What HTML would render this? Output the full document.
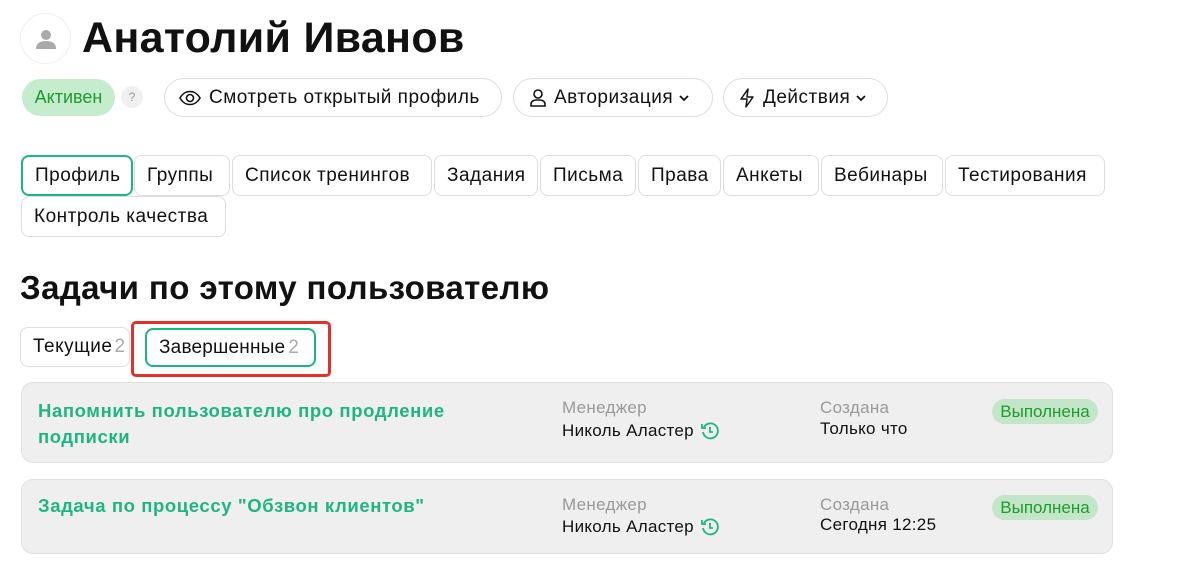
<!DOCTYPE html>
<html><head><meta charset="utf-8"><style>
*{box-sizing:border-box;margin:0;padding:0}
body{width:1200px;height:575px;background:#fff;font-family:"Liberation Sans",sans-serif;color:#111;position:relative;overflow:hidden}
.a{position:absolute}
.btn{position:absolute;border:1px solid #ddd;border-radius:20px;height:39px;display:flex;align-items:center;font-size:19px;letter-spacing:0.5px;padding:0 14px;white-space:nowrap}
.tab{position:absolute;border:1px solid #ddd;border-radius:8px;height:41px;display:flex;align-items:center;padding-left:12px;font-size:19px;letter-spacing:0.5px;white-space:nowrap}
.card{position:absolute;left:21px;width:1092px;background:#efefef;border:1px solid #e0e0e0;border-radius:12px}
.t{position:absolute;color:#1fb583;font-size:18.5px;letter-spacing:0.6px;font-weight:bold;line-height:26px}
.lbl{position:absolute;color:#999;font-size:17px;letter-spacing:0.3px}
.val{position:absolute;font-size:17px;letter-spacing:0.3px;color:#111;display:flex;align-items:center;gap:6px}
.badge{position:absolute;left:970px;width:106px;height:25px;background:#c3e6c8;color:#1f9a2e;border-radius:13px;font-size:17px;display:flex;align-items:center;justify-content:center}
</style></head><body>
<div class="a" style="left:20px;top:13px;width:51px;height:51px;border:1px solid #eee;border-radius:50%;display:flex;align-items:center;justify-content:center">
<svg width="24" height="24" viewBox="0 0 24 24"><circle cx="12" cy="8" r="5" fill="#aaa"/><path d="M2 22c0-6 4-8 10-8s10 2 10 8z" fill="#aaa"/></svg></div>
<div class="a" style="left:82px;top:10px;font-size:43px;font-weight:bold;line-height:56px;letter-spacing:0.3px">Анатолий Иванов</div>

<div class="a" style="left:22px;top:79px;width:93px;height:37px;background:#c6ecce;border-radius:19px;color:#1f9a2e;font-size:18px;display:flex;align-items:center;justify-content:center">Активен</div>
<div class="a" style="left:121px;top:86px;width:22px;height:22px;background:#f0f0f0;border-radius:50%;color:#999;font-size:12px;display:flex;align-items:center;justify-content:center">?</div>
<div class="btn" style="left:164px;top:78px;width:338px"><svg width="22" height="16" viewBox="0 0 22 16" style="margin-right:8px"><path d="M1 8C4 3 7 1.5 11 1.5S18 3 21 8C18 13 15 14.5 11 14.5S4 13 1 8z" fill="none" stroke="#111" stroke-width="1.6"/><circle cx="11" cy="8" r="3.5" fill="none" stroke="#111" stroke-width="1.6"/></svg>Смотреть открытый профиль</div>
<div class="btn" style="left:513px;top:78px;width:200px"><svg width="20" height="20" viewBox="0 0 20 20" style="margin-right:6px"><circle cx="10" cy="6" r="4" fill="none" stroke="#111" stroke-width="1.6"/><path d="M3 18v-2c0-2 2-4 5-4h4c3 0 5 2 5 4v2z" fill="none" stroke="#111" stroke-width="1.6"/></svg>Авторизация<svg width="12" height="8" viewBox="0 0 12 8" style="margin-left:5px"><path d="M2 2l4 4 4-4" fill="none" stroke="#111" stroke-width="1.8"/></svg></div>
<div class="btn" style="left:723px;top:78px;width:165px"><svg width="18" height="20" viewBox="0 0 18 20" style="margin-right:7px"><path d="M10 1L3 11h6l-1 8 7-10H9z" fill="none" stroke="#111" stroke-width="1.5" stroke-linejoin="round"/></svg>Действия<svg width="12" height="8" viewBox="0 0 12 8" style="margin-left:5px"><path d="M2 2l4 4 4-4" fill="none" stroke="#111" stroke-width="1.8"/></svg></div>

<div class="tab" style="left:21px;top:155px;width:112px;border:2px solid #1fb583">Профиль</div>
<div class="tab" style="left:134px;top:155px;width:96px">Группы</div>
<div class="tab" style="left:232px;top:155px;width:200px">Список тренингов</div>
<div class="tab" style="left:434px;top:155px;width:104px">Задания</div>
<div class="tab" style="left:540px;top:155px;width:96px">Письма</div>
<div class="tab" style="left:638px;top:155px;width:83px">Права</div>
<div class="tab" style="left:723px;top:155px;width:96px">Анкеты</div>
<div class="tab" style="left:821px;top:155px;width:122px">Вебинары</div>
<div class="tab" style="left:945px;top:155px;width:160px">Тестирования</div>
<div class="tab" style="left:21px;top:196px;width:205px">Контроль качества</div>

<div class="a" style="left:20px;top:266px;font-size:33px;font-weight:bold;line-height:44px;letter-spacing:0.4px">Задачи по этому пользователю</div>

<div class="tab" style="left:20px;top:327px;width:110px;height:40px">Текущие<span style="color:#aaa;margin-left:2px">2</span></div>
<div class="a" style="left:131px;top:321px;width:200px;height:56px;border:3px solid #e0312b;border-radius:5px"></div>
<div class="tab" style="left:145px;top:328px;width:171px;height:39px;border:2px solid #1fb583;letter-spacing:0.2px">Завершенные<span style="color:#aaa;margin-left:3px">2</span></div>

<div class="card" style="top:382px;height:81px">
<div class="t" style="left:16px;top:15px;width:470px">Напомнить пользователю про продление подписки</div>
<div class="lbl" style="left:540px;top:15px">Менеджер</div>
<div class="val" style="left:540px;top:38px">Николь Аластер <svg width="20" height="20" viewBox="0 0 20 20"><path d="M4 6A7.5 7.5 0 1 1 3 11" fill="none" stroke="#1fb583" stroke-width="1.8"/><path d="M2 3v4h4" fill="none" stroke="#1fb583" stroke-width="1.8"/><path d="M10 6v5h3" fill="none" stroke="#1fb583" stroke-width="1.8"/></svg></div>
<div class="lbl" style="left:798px;top:15px">Создана</div>
<div class="val" style="left:798px;top:36px">Только что</div>
<div class="badge" style="top:16px">Выполнена</div>
</div>
<div class="card" style="top:479px;height:75px">
<div class="t" style="left:16px;top:13px;width:470px">Задача по процессу "Обзвон клиентов"</div>
<div class="lbl" style="left:540px;top:15px">Менеджер</div>
<div class="val" style="left:540px;top:37px">Николь Аластер <svg width="20" height="20" viewBox="0 0 20 20"><path d="M4 6A7.5 7.5 0 1 1 3 11" fill="none" stroke="#1fb583" stroke-width="1.8"/><path d="M2 3v4h4" fill="none" stroke="#1fb583" stroke-width="1.8"/><path d="M10 6v5h3" fill="none" stroke="#1fb583" stroke-width="1.8"/></svg></div>
<div class="lbl" style="left:798px;top:15px">Создана</div>
<div class="val" style="left:798px;top:35px">Сегодня 12:25</div>
<div class="badge" style="top:15px">Выполнена</div>
</div>
</body></html>
